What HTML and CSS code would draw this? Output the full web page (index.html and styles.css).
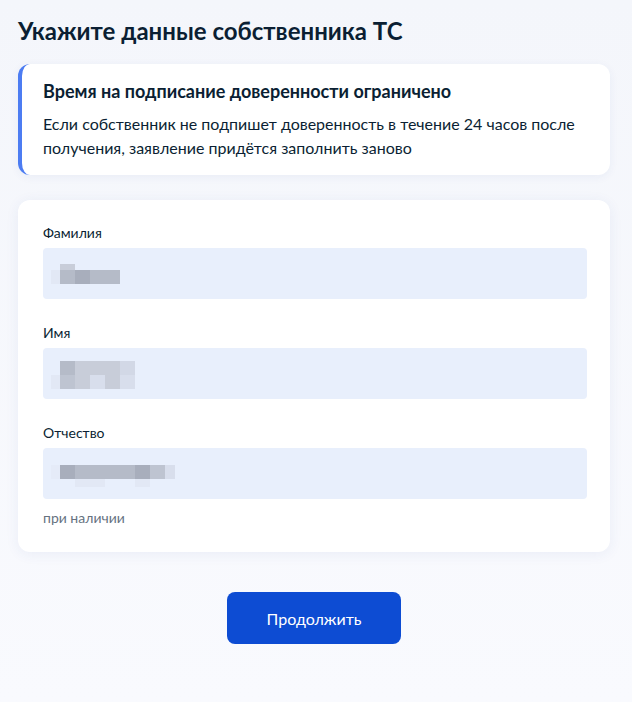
FILE: index.html
```html
<!DOCTYPE html>
<html lang="ru">
<head>
  <meta charset="UTF-8" />
  <meta name="viewport" content="width=device-width, initial-scale=1.0"/>
  <title>Данные собственника ТС</title>
  <link rel="stylesheet" href="styles.css">
</head>
<body>
  <h1 class="page-title">Укажите данные собственника ТС</h1>

  <!-- Notice about the time limit -->
  <div class="notice">
    <h2 class="notice-title">Время на подписание доверенности ограничено</h2>
    <p class="notice-text">Если собственник не подпишет доверенность в течение 24 часов после получения, заявление придётся заполнить заново</p>
  </div>

  <!-- Owner form (values are masked) -->
  <form class="card">
    <div class="field">
      <label class="label">Фамилия</label>
      <div class="input last-name">
        <div class="blur">
          <div class="row top"><span class="px gap"></span><span class="px c3"></span></div>
          <div class="row"><span class="px gap c6"></span><span class="px c1"></span><span class="px c0"></span><span class="px c1"></span><span class="px c1"></span></div>
        </div>
      </div>
    </div>

    <div class="field">
      <label class="label">Имя</label>
      <div class="input first-name">
        <div class="blur">
          <div class="row"><span class="px wide-gap"></span><span class="px c1"></span><span class="px c3"></span><span class="px c3"></span><span class="px c3"></span><span class="px c4"></span></div>
          <div class="row"><span class="px wide-gap c6"></span><span class="px c2"></span><span class="px c3"></span><span class="px c5"></span><span class="px c3"></span><span class="px c5"></span></div>
        </div>
      </div>
    </div>

    <div class="field">
      <label class="label">Отчество</label>
      <div class="input middle-name">
        <div class="blur">
          <div class="row"><span class="px wide-gap c7"></span><span class="px c0"></span><span class="px c1"></span><span class="px c1"></span><span class="px c1"></span><span class="px c1"></span><span class="px c0"></span><span class="px c2"></span><span class="px half c5"></span></div>
          <div class="row bottom"><span class="px wide-gap"></span><span class="px"></span><span class="px c6"></span><span class="px c6"></span><span class="px"></span><span class="px"></span><span class="px c6"></span></div>
        </div>
      </div>
      <div class="hint">при наличии</div>
    </div>
  </form>

  <div class="actions">
    <button type="button" class="button">Продолжить</button>
  </div>
</body>
</html>
```

FILE: styles.css
```css
* {
  box-sizing: border-box;
}

html {
  min-height: 100%;
  background: linear-gradient(#f4f6fb, #f9fafe);
}

body {
  margin: 0;
  padding: 15px 22px 40px 18px;
  font-family: Lato, 'Open Sans', sans-serif;
  color: #0b1f33;
}

.page-title {
  margin: 0 0 17px;
  font-size: 24px;
  line-height: 32px;
  font-weight: 700;
}

.notice {
  background-color: #fff;
  border-left: 4px solid #4c7cf2;
  border-radius: 12px;
  padding: 15px 20px 15px 21px;
  box-shadow: 0 2px 10px rgba(36, 72, 150, 0.06);
}

.notice-title {
  margin: 0 0 9px;
  font-size: 18px;
  line-height: 24px;
  font-weight: 700;
}

.notice-text {
  margin: 0;
  font-size: 16px;
  line-height: 24px;
}

.card {
  margin-top: 25px;
  background-color: #fff;
  border-radius: 12px;
  padding: 23px 23px 25px 25px;
  box-shadow: 0 2px 14px rgba(36, 72, 150, 0.07);
}

.field + .field {
  margin-top: 24px;
}

.label {
  display: block;
  font-size: 14px;
  line-height: 20px;
  margin-bottom: 5px;
}

.input {
  height: 51px;
  background-color: #e8effc;
  border-radius: 4px;
  padding-left: 8px;
}

.last-name {
  padding-top: 16px;
}

.first-name {
  padding-top: 13px;
}

.middle-name {
  padding-top: 17px;
}

.blur {
  display: flex;
  flex-direction: column;
}

.row {
  display: flex;
  height: 14px;
}

.row.top {
  height: 6px;
}

.row.bottom {
  height: 8px;
}

.px {
  width: 15px;
}

.px.gap {
  width: 9px;
}

.px.wide-gap {
  width: 9px;
}

.px.half {
  width: 10px;
}

.c0 { background-color: #a8aebc; }
.c1 { background-color: #b5bbc8; }
.c2 { background-color: #bec4d1; }
.c3 { background-color: #c8cdd9; }
.c4 { background-color: #d2d8e6; }
.c5 { background-color: #d8deec; }
.c6 { background-color: #e2e8f5; }
.c7 { background-color: #e5ebf8; }

.hint {
  margin-top: 10px;
  font-size: 14px;
  line-height: 18px;
  color: #66727f;
}

.actions {
  display: flex;
  justify-content: center;
  margin-top: 40px;
}

.button {
  width: 174px;
  height: 52px;
  border: none;
  border-radius: 8px;
  background-color: #0d4cd3;
  color: #fff;
  font-family: Lato, 'Open Sans', sans-serif;
  font-size: 16px;
  cursor: pointer;
}
```
